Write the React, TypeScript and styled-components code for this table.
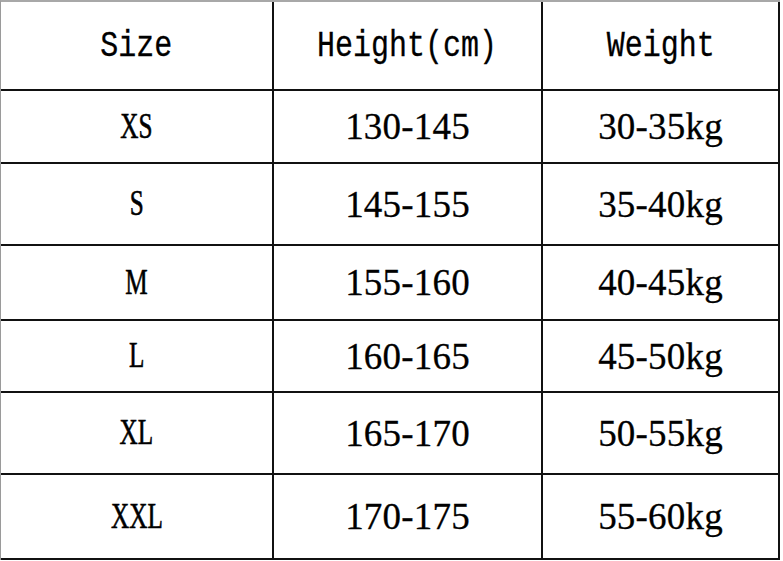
import React from "react";
import styled, { createGlobalStyle } from "styled-components";

const Global = createGlobalStyle`
  html, body { margin: 0; padding: 0; background: #ffffff; }
  body { width: 783px; height: 561px; overflow: hidden; }
`;

const Table = styled.div`
  display: grid;
  grid-template-columns: 273px 269px 237px;
  grid-template-rows: 89px 73px 82px 75px 72px 82px 85px;
  width: max-content;
  border-top: 2px solid #a8a8a8;
  border-left: 1px solid #9a9a9a;
  box-sizing: border-box;
`;

const Cell = styled.div<{ $header?: boolean }>`
  box-sizing: border-box;
  border-right: 2px solid #111;
  border-bottom: 2px solid #111;
  display: flex;
  align-items: center;
  justify-content: center;
  color: #000;
  overflow: hidden;
  padding-top: ${(p) => (p.$header ? "2px" : "0")};
`;

const HeadText = styled.span`
  font-family: "Liberation Mono", "DejaVu Sans Mono", monospace;
  font-size: 36px;
  display: inline-block;
  transform: scaleX(0.833);
  white-space: nowrap;
  -webkit-text-stroke: 0.3px #000;
`;

const SizeText = styled.span`
  font-family: "Liberation Serif", "Times New Roman", serif;
  font-size: 35px;
  display: inline-block;
  transform: scaleX(0.72);
  white-space: nowrap;
  -webkit-text-stroke: 0.6px #000;
`;

const ValueText = styled.span`
  font-family: "Liberation Serif", "Times New Roman", serif;
  font-size: 37px;
  white-space: nowrap;
  letter-spacing: 0.2px;
  -webkit-text-stroke: 0.3px #000;
`;

const rows = [
  { size: "XS", height: "130-145", weight: "30-35kg" },
  { size: "S", height: "145-155", weight: "35-40kg" },
  { size: "M", height: "155-160", weight: "40-45kg" },
  { size: "L", height: "160-165", weight: "45-50kg" },
  { size: "XL", height: "165-170", weight: "50-55kg" },
  { size: "XXL", height: "170-175", weight: "55-60kg" },
];

export default function App() {
  return (
    <>
      <Global />
      <Table>
        <Cell $header>
          <HeadText>Size</HeadText>
        </Cell>
        <Cell $header>
          <HeadText>Height(cm)</HeadText>
        </Cell>
        <Cell $header>
          <HeadText>Weight</HeadText>
        </Cell>
        {rows.map((r) => (
          <React.Fragment key={r.size}>
            <Cell>
              <SizeText>{r.size}</SizeText>
            </Cell>
            <Cell>
              <ValueText>{r.height}</ValueText>
            </Cell>
            <Cell>
              <ValueText>{r.weight}</ValueText>
            </Cell>
          </React.Fragment>
        ))}
      </Table>
    </>
  );
}
